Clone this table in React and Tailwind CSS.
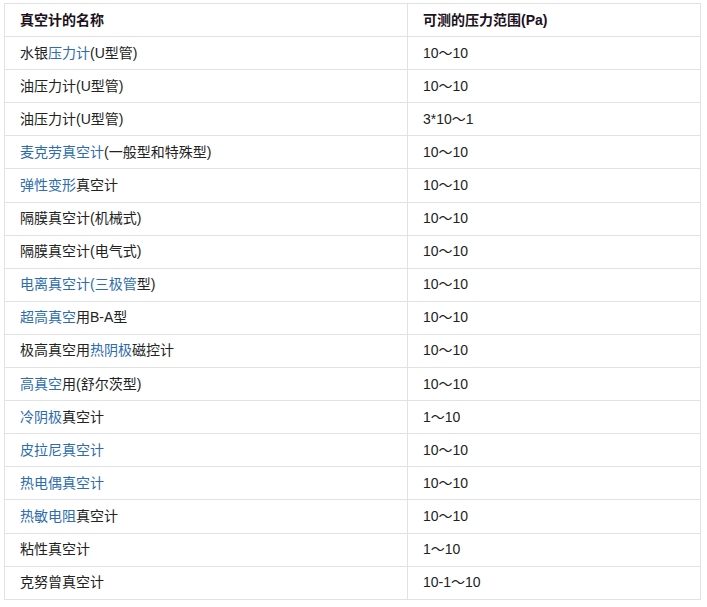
import React from 'react';

const B = ({ children }) => <span className="text-[#2d6cae]">{children}</span>;

const rows = [
    [<>水银<B>压力计</B>(U型管)</>, '10～10'],
    [<>油压力计(U型管)</>, '10～10'],
    [<>油压力计(U型管)</>, '3*10～1'],
    [<><B>麦克劳真空计</B>(一般型和特殊型)</>, '10～10'],
    [<><B>弹性变形</B>真空计</>, '10～10'],
    [<>隔膜真空计(机械式)</>, '10～10'],
    [<>隔膜真空计(电气式)</>, '10～10'],
    [<><B>电离真空计(三极管</B>型)</>, '10～10'],
    [<><B>超高真空</B>用B-A型</>, '10～10'],
    [<>极高真空用<B>热阴极</B>磁控计</>, '10～10'],
    [<><B>高真空</B>用(舒尔茨型)</>, '10～10'],
    [<><B>冷阴极</B>真空计</>, '1～10'],
    [<><B>皮拉尼真空计</B></>, '10～10'],
    [<><B>热电偶真空计</B></>, '10～10'],
    [<><B>热敏电阻</B>真空计</>, '10～10'],
    [<>粘性真空计</>, '1～10'],
    [<>克努曾真空计</>, '10-1～10'],
];

const cell = 'h-[33.1px] border border-[#e2e2e2] pl-[15px] pr-2 py-0 align-middle';

export default function App() {
    return (
        <div
            className="bg-white w-[707px] h-[607px] pt-[3px] pl-[4px] text-[14px] text-[#222]"
            style={{ fontFamily: '"Liberation Sans", "Noto Sans CJK SC", sans-serif' }}
        >
            <table className="border-collapse w-[697px] table-fixed">
                <colgroup>
                    <col className="w-[403px]" />
                    <col />
                </colgroup>
                <thead>
                    <tr>
                        <th className={cell + ' text-left font-bold text-[#1c111c]'}>真空计的名称</th>
                        <th className={cell + ' text-left font-bold text-[#1c111c]'}>可测的压力范围(Pa)</th>
                    </tr>
                </thead>
                <tbody>
                    {rows.map(([name, range], i) => (
                        <tr key={i}>
                            <td className={cell}>{name}</td>
                            <td className={cell}>{range}</td>
                        </tr>
                    ))}
                </tbody>
            </table>
        </div>
    );
}
